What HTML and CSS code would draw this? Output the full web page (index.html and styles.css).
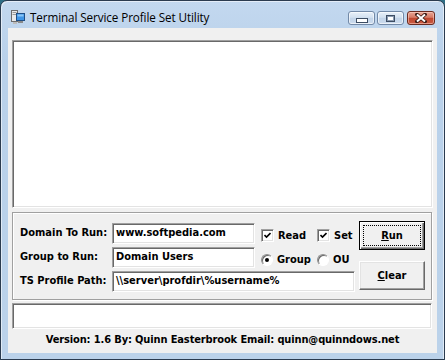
FILE: index.html
```html
<!DOCTYPE html>
<html>
<head>
<meta charset="utf-8">
<link rel="stylesheet" href="styles.css">
</head>
<body>
<div class="window">
  <div class="titlebar">
    <svg class="app-icon" width="16" height="16" viewBox="0 0 16 16">
      <rect x="1.5" y="1.5" width="6" height="11" fill="#e9e9e9" stroke="#6e6e6e"/>
      <rect x="2.5" y="3" width="4" height="1" fill="#9a9a9a"/>
      <rect x="2.5" y="5" width="4" height="1" fill="#9a9a9a"/>
      <rect x="6.5" y="4.5" width="8" height="7" fill="#3f95e6" stroke="#1f4f86"/>
      <rect x="7.5" y="5.5" width="6" height="2" fill="#8cc6f5"/>
      <rect x="8" y="12" width="5" height="2" fill="#8a8a8a"/>
      <rect x="3" y="13" width="4" height="2" fill="#bdbdbd"/>
    </svg>
    <span class="title">Terminal Service Profile Set Utility</span>
    <div class="caption-buttons">
      <div class="cap min"><span class="min-glyph"></span></div>
      <div class="cap max"><span class="max-glyph"></span></div>
      <div class="cap close">
        <svg width="12" height="10" viewBox="0 0 12 10">
          <path d="M2 1.5 L10 8.5 M10 1.5 L2 8.5" stroke="#3b1a14" stroke-width="3.6" stroke-linecap="square"/>
          <path d="M2 1.5 L10 8.5 M10 1.5 L2 8.5" stroke="#ffffff" stroke-width="2"/>
        </svg>
      </div>
    </div>
  </div>
  <div class="client">
    <div class="memo"></div>
    <div class="group">
      <div class="fields">
        <span class="lbl">Domain To Run:</span>
        <div class="edit">www.softpedia.com</div>
        <div class="opts">
          <span class="opt"><span class="chk"><svg width="7" height="7" viewBox="0 0 7 7"><path d="M0.5 3 L2.5 5 L6.5 1" stroke="#000" stroke-width="1.6" fill="none"/></svg></span>Read</span>
          <span class="opt"><span class="chk"><svg width="7" height="7" viewBox="0 0 7 7"><path d="M0.5 3 L2.5 5 L6.5 1" stroke="#000" stroke-width="1.6" fill="none"/></svg></span>Set</span>
        </div>
        <span class="lbl">Group to Run:</span>
        <div class="edit">Domain Users</div>
        <div class="opts">
          <span class="opt"><span class="radio on"></span>Group</span>
          <span class="opt"><span class="radio"></span>OU</span>
        </div>
        <span class="lbl">TS Profile Path:</span>
        <div class="edit wide">\\server\profdir\%username%</div>
      </div>
      <div class="buttons">
        <div class="btn default"><span class="focus"><u>R</u>un</span></div>
        <div class="btn"><u>C</u>lear</div>
      </div>
    </div>
    <div class="status-edit"></div>
    <div class="version">Version: 1.6 By: Quinn Easterbrook Email: quinn@quinndows.net</div>
  </div>
</div>
</body>
</html>
```
FILE: styles.css
```css
html, body {
  margin: 0;
  padding: 0;
  background: #2f6f86;
}
.window {
  width: 445px;
  height: 360px;
  box-sizing: border-box;
  border: 1px solid #2b3b4f;
  border-radius: 7px 7px 0 0;
  background: linear-gradient(#c3d8ef, #b9d1ea 60px, #bbd2ea);
  padding: 0 7px 6px;
  display: flex;
  flex-direction: column;
  box-shadow: inset 1px 1px rgba(255,255,255,0.55), inset -1px 0 rgba(255,255,255,0.55);
}
.titlebar {
  height: 27px;
  display: flex;
  align-items: flex-start;
}
.app-icon {
  margin: 8px 4px 0 2px;
  flex: none;
}
.title {
  font-family: "Open Sans", "Noto Sans", sans-serif;
  font-size: 11.7px;
  line-height: 16px;
  margin-top: 8px;
  color: #000;
  letter-spacing: -0.1px;
}
.caption-buttons {
  margin-left: auto;
  margin-right: 2px;
  margin-top: 10px;
  display: flex;
}
.cap {
  height: 14px;
  box-sizing: border-box;
  border-radius: 3px;
  display: flex;
  align-items: center;
  justify-content: center;
}
.min, .max {
  width: 27px;
  border: 1px solid #7289a7;
  background: linear-gradient(#e8f0f9, #d3e1f0 45%, #c2d4e9 50%, #cddcee);
  box-shadow: inset 0 0 0 1px rgba(255,255,255,0.6);
}
.min { margin-right: 2px; }
.max { margin-right: 3px; }
.close {
  width: 28px;
  border: 1px solid #6b2b20;
  background: linear-gradient(#e8a494, #d67a66 45%, #c0472f 50%, #c95a42);
  box-shadow: inset 0 0 0 1px rgba(255,220,210,0.5);
}
.min-glyph {
  width: 10px;
  height: 3px;
  margin-top: 4px;
  background: #fff;
  border: 1px solid #3d4d63;
}
.max-glyph {
  width: 7px;
  height: 5px;
  background: #fff;
  border: 1px solid #3d4d63;
  box-shadow: inset 0 0 0 1px #8a9ab0;
}
.client {
  flex: 1;
  background: #f0f0f0;
  padding: 12px 4px 0;
  display: flex;
  flex-direction: column;
  font-family: "DejaVu Sans Condensed", "DejaVu Sans", sans-serif;
  font-stretch: condensed;
  font-weight: bold;
  font-size: 11px;
  color: #000;
}
.memo, .edit, .status-edit {
  box-sizing: border-box;
  background: #fff;
  border: 1px solid;
  border-color: #a0a0a0 #fff #fff #a0a0a0;
  box-shadow: inset 1px 1px #696969, inset -1px -1px #e3e3e3;
}
.memo {
  height: 168px;
}
.group {
  margin-top: 4px;
  margin-right: 1px;
  height: 88px;
  box-sizing: border-box;
  border: 1px solid #a0a0a0;
  box-shadow: inset 1px 1px #fff, 1px 1px #fff;
  padding: 8px 6px 0 7px;
  display: flex;
  gap: 4px;
}
.fields {
  margin-top: 2px;
  display: grid;
  grid-template-columns: 86px 143px 94px;
  grid-template-rows: 21px 21px 21px;
  column-gap: 6px;
  row-gap: 3px;
}
.lbl {
  line-height: 13px;
  padding-top: 3px;
  white-space: nowrap;
}
.edit {
  line-height: 17px;
  padding-left: 3px;
  white-space: nowrap;
}
.edit.wide {
  grid-column: 2 / 4;
}
.opts {
  display: flex;
  align-items: center;
  padding-top: 4px;
}
.opt {
  width: 56px;
  flex: none;
  display: flex;
  align-items: center;
  gap: 4px;
  line-height: 13px;
}
.chk {
  width: 13px;
  height: 13px;
  box-sizing: border-box;
  background: #fff;
  border: 1px solid;
  border-color: #a0a0a0 #fff #fff #a0a0a0;
  box-shadow: inset 1px 1px #696969, inset -1px -1px #e3e3e3;
  display: flex;
  align-items: center;
  justify-content: center;
  flex: none;
}
.radio {
  width: 12px;
  height: 12px;
  box-sizing: border-box;
  border-radius: 50%;
  background: #fff;
  border: 1px solid;
  border-color: #8f8f8f #fff #fff #8f8f8f;
  box-shadow: inset 1px 1px #696969;
  flex: none;
  display: flex;
  align-items: center;
  justify-content: center;
}
.radio.on::after {
  content: "";
  width: 4px;
  height: 4px;
  border-radius: 50%;
  background: #000;
}
.buttons {
  display: flex;
  flex-direction: column;
  gap: 11px;
}
.btn {
  width: 66px;
  height: 29px;
  box-sizing: border-box;
  background: #f0f0f0;
  border: 1px solid;
  border-color: #fff #696969 #696969 #fff;
  box-shadow: inset -1px -1px #a0a0a0, inset 1px 1px #e3e3e3;
  display: flex;
  align-items: center;
  justify-content: center;
  line-height: 13px;
}
.btn.default {
  border: 1px solid #000;
  box-shadow: inset 1px 1px #fff, inset -1px -1px #696969, inset -2px -2px #a0a0a0;
  padding: 3px;
}
.focus {
  flex: 1;
  align-self: stretch;
  border: 1px dotted #000;
  display: flex;
  align-items: center;
  justify-content: center;
}
.status-edit {
  margin-top: 3px;
  margin-right: 1px;
  height: 26px;
}
.version {
  margin-top: 4px;
  line-height: 13px;
  text-align: center;
  white-space: nowrap;
  letter-spacing: -0.13px;
}
```
